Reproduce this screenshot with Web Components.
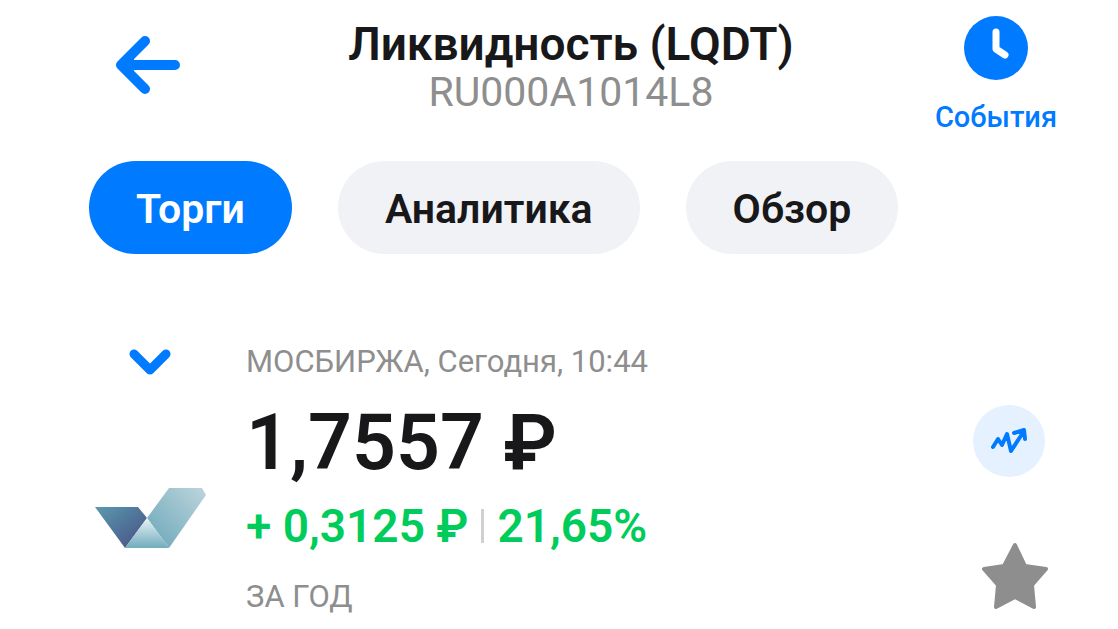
<!DOCTYPE html>
<html lang="ru">
<head>
<meta charset="utf-8">
<meta name="viewport" content="width=device-width, initial-scale=1">
<title>Ликвидность (LQDT)</title>
<style>
  body { margin: 0; background: #fff; font-family: Roboto, "Noto Sans", sans-serif; color: #18181a;
    --blue: #007aff; --grey: #8e8e8e; --green: #00cc5c; --chip: #f1f2f6; }
</style>
</head>
<body>
<fund-page></fund-page>
<script>
const define = (name, html) => {
  const template = document.createElement('template');
  template.innerHTML = html;
  customElements.define(name, class extends HTMLElement {
    constructor() {
      super();
      this.attachShadow({ mode: 'open' }).append(template.content.cloneNode(true));
    }
  });
};

define('fund-header', `
  <style>
    :host { display: grid; grid-template-columns: 118px 1fr auto; align-items: start; }
    button { border: 0; background: none; padding: 0; font: inherit; color: var(--blue); cursor: pointer; }
    svg { display: block; }
    .back { display: grid; place-items: center; height: 98px; }
    .names { text-align: center; padding-top: 2px; }
    h1 { margin: 0; font-size: 46px; line-height: 52px; font-weight: 600; }
    p { margin: 0; font-size: 41px; line-height: 44px; color: var(--grey); }
    .events { display: flex; flex-direction: column; align-items: center; gap: 21px;
      font-size: 29px; line-height: 32px; font-weight: 500; }
  </style>
  <button class="back" aria-label="Назад">
    <svg width="66" height="60" viewBox="0 0 66 60" fill="none" stroke="currentColor" stroke-width="10" stroke-linecap="round" stroke-linejoin="round">
      <path d="M30 6 6 30 30 54M8 30H60"/><path d="M10 30 19 21V39Z" fill="currentColor" stroke="none"/></svg>
  </button>
  <div class="names">
    <h1><slot name="title"></slot></h1>
    <p><slot name="code"></slot></p>
  </div>
  <button class="events">
    <svg width="64" height="64" viewBox="0 0 64 64" fill="none" aria-hidden="true">
      <circle cx="32" cy="32" r="32" fill="currentColor"/>
      <path d="M32 16V33L41 39" stroke="#fff" stroke-width="7" stroke-linecap="round" stroke-linejoin="round"/></svg>
    <slot name="events"></slot>
  </button>`);

define('tab-chip', `
  <style>
    :host { display: block; }
    button { display: block; border: 0; border-radius: 47px; padding: 24px 47px 21px; background: var(--chip);
      color: inherit; font: inherit; font-size: 41px; line-height: 48px; font-weight: 600; white-space: nowrap; cursor: pointer; }
    :host([selected]) button { background: var(--blue); color: #fff; }
  </style>
  <button><slot></slot></button>`);

define('tab-row', `
  <style>:host { display: flex; gap: 46px; }</style>
  <slot></slot>`);

define('fund-logo', `
  <style>:host { display: block; } svg { display: block; }</style>
  <svg width="112" height="60" viewBox="0 0 112 60" role="img" aria-label="Логотип фонда">
    <defs>
      <linearGradient id="a" x1="0" y1="0" x2="1" y2="1"><stop offset="0" stop-color="#5b9aae"/><stop offset=".55" stop-color="#4f7097"/><stop offset="1" stop-color="#494f80"/></linearGradient>
      <linearGradient id="b" x1="1" y1="0" x2="0" y2="1"><stop offset="0" stop-color="#bdd5dc"/><stop offset=".5" stop-color="#93bdca"/><stop offset="1" stop-color="#68a6b8"/></linearGradient>
      <linearGradient id="c" x1="0" y1="0" x2="0" y2="1"><stop offset="0" stop-color="#e8f2f5"/><stop offset="1" stop-color="#71acbd"/></linearGradient>
    </defs>
    <path d="M1 19H44L53 30 31 60Z" fill="url(#a)"/>
    <path d="M53 30 75 0H108L112 7 75 60Z" fill="url(#b)"/>
    <path d="M53 30 75 60H31Z" fill="url(#c)"/>
  </svg>`);

define('fund-quote', `
  <style>
    :host { display: block; }
    p { margin: 0; }
    .note { font-size: 31px; line-height: 36px; color: var(--grey); }
    .price { margin-top: 19px; font-size: 77px; line-height: 88px; font-weight: 600; }
    .change { display: flex; align-items: center; margin: 12px 0 26px; gap: 13px; font-size: 46px; line-height: 54px;
      font-weight: 600; color: var(--green); }
    i { width: 3px; height: 34px; background: #d0d0d0; }
  </style>
  <p class="note"><slot name="when"></slot></p>
  <p class="price"><slot name="price"></slot></p>
  <p class="change"><slot name="gain"></slot><i></i><slot name="percent"></slot></p>
  <p class="note"><slot name="period"></slot></p>`);

define('fund-summary', `
  <style>
    :host { display: grid; grid-template-columns: 122px 1fr 84px; column-gap: 35px; }
    button { border: 0; background: none; padding: 0; cursor: pointer; display: grid; place-items: center; }
    svg { display: block; }
    .left { display: flex; flex-direction: column; align-items: center; gap: 108px; }
    .fold { height: 36px; width: 60px; color: var(--blue); }
    .right { display: flex; flex-direction: column; align-items: flex-start; gap: 65px; padding-top: 61px; }
    .chart { width: 72px; height: 72px; border-radius: 50%; background: #e5f1ff; color: var(--blue); }
    .star { width: 84px; color: #8e8e8e; }
  </style>
  <div class="left">
    <button class="fold" aria-label="Выбрать площадку">
      <svg width="42" height="28" viewBox="0 0 42 28" fill="none" stroke="currentColor" stroke-width="9" stroke-linecap="round" stroke-linejoin="round"><path d="M5 6 21 22 37 6"/></svg>
    </button>
    <fund-logo></fund-logo>
  </div>
  <slot></slot>
  <div class="right">
    <button class="chart" aria-label="График">
      <svg width="38" height="28" viewBox="0 0 38 28" fill="none" stroke="currentColor" stroke-width="4" stroke-linecap="round" stroke-linejoin="round">
        <path d="M3 20 8 12 12 18 17 7 21 24 34 4M24 6 34 3 35 12"/></svg>
    </button>
    <button class="star" aria-label="В избранное">
      <svg width="68" height="68" viewBox="0 0 68 68" fill="currentColor" stroke="currentColor" stroke-width="4" stroke-linejoin="round">
        <path d="M34 3 44 24 65 27 51 43 53 65 34 55 15 65 17 43 3 27 23 24Z"/></svg>
    </button>
  </div>`);

define('fund-page', `
  <style>
    :host { display: block; padding: 16px 61px 14px 89px; }
    tab-row { margin-top: 28px; }
    fund-summary { margin-top: 90px; }
  </style>
  <fund-header>
    <span slot="title">Ликвидность (LQDT)</span>
    <span slot="code">RU000A1014L8</span>
    <span slot="events">События</span>
  </fund-header>
  <tab-row>
    <tab-chip selected>Торги</tab-chip>
    <tab-chip>Аналитика</tab-chip>
    <tab-chip>Обзор</tab-chip>
  </tab-row>
  <fund-summary>
    <fund-quote>
      <span slot="when">МОСБИРЖА, Сегодня, 10:44</span>
      <span slot="price">1,7557 ₽</span>
      <span slot="gain">+ 0,3125 ₽</span>
      <span slot="percent">21,65%</span>
      <span slot="period">ЗА ГОД</span>
    </fund-quote>
  </fund-summary>`);
</script>
</body>
</html>
